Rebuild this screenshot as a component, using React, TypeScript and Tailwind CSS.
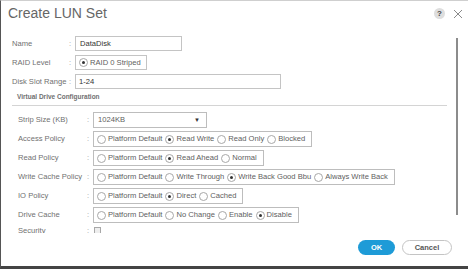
import React from "react";

type Opt = { label: string; checked?: boolean };

function Radio({ checked }: { checked?: boolean }) {
  return (
    <span className="flex h-[9px] w-[9px] shrink-0 items-center justify-center rounded-full border border-[#a8a8a8] bg-white">
      {checked ? <span className="h-[3px] w-[3px] rounded-full bg-[#333]" /> : null}
    </span>
  );
}

function RadioGroup({ options }: { options: Opt[] }) {
  return (
    <div className="flex h-[16px] items-center gap-[3px] border border-[#bdbdbd] bg-white pl-[3px] pr-[6px]">
      {options.map((o) => (
        <span key={o.label} className="flex items-center gap-[2px] text-[#606060]">
          <Radio checked={o.checked} />
          <span className="whitespace-nowrap">{o.label}</span>
        </span>
      ))}
    </div>
  );
}

function TopRow({ label, children }: { label: string; children: React.ReactNode }) {
  return (
    <div className="flex h-[15px] items-center">
      <div className="w-[57px] whitespace-nowrap text-[#707070]">{label}</div>
      <div className="w-[6px] text-[#999]">:</div>
      {children}
    </div>
  );
}

function Row({ label, children }: { label: string; children: React.ReactNode }) {
  return (
    <div className="flex h-[16px] items-center">
      <div className="w-[69px] whitespace-nowrap text-[#707070]">{label}</div>
      <div className="w-[6px] text-[#999]">:</div>
      {children}
    </div>
  );
}

export default function App() {
  return (
    <div className="flex h-[269px] w-[468px] flex-col overflow-hidden border-b-[3px] border-l border-t border-b-[#444] border-l-[#555] border-t-[#cfcfcf] bg-white font-['Liberation_Sans',Arial,sans-serif] text-[7.6px] leading-[10px]">
      {/* Header */}
      <div className="flex h-[33px] shrink-0 items-start justify-between pl-[7px] pr-[5px] pt-[4px]">
        <div className="text-[14px] leading-[16px] text-[#666]">Create LUN Set</div>
        <div className="flex items-center gap-[8px] pt-[3px]">
          <span className="flex h-[11px] w-[11px] items-center justify-center rounded-full bg-[#dedede] text-[8px] font-bold leading-none text-[#444]">
            ?
          </span>
          <svg width="10" height="10" viewBox="0 0 10 10" className="block">
            <path d="M1 1 L9 9 M9 1 L1 9" stroke="#8a8a8a" strokeWidth="1" fill="none" />
          </svg>
        </div>
      </div>

      {/* Body */}
      <div className="flex h-[199px] shrink-0">
        <div className="h-full flex-1 overflow-hidden pl-[11px] pt-[2px]">
          <div className="flex flex-col gap-[4px]">
            <TopRow label="Name">
              <div className="flex h-[15px] w-[107px] items-center border border-[#c4c4c4] px-[4px] text-[#333]">
                DataDisk
              </div>
            </TopRow>
            <TopRow label="RAID Level">
              <div className="flex h-[15px] items-center gap-[2px] border border-[#c4c4c4] pl-[3px] pr-[5px] text-[#606060]">
                <Radio checked />
                <span className="whitespace-nowrap">RAID 0 Striped</span>
              </div>
            </TopRow>
            <TopRow label="Disk Slot Range">
              <div className="flex h-[15px] w-[206px] items-center border border-[#c4c4c4] px-[3px] text-[#333]">
                1-24
              </div>
            </TopRow>
          </div>

          <div className="mt-[4px] h-[8px] pl-[5px] text-[6.5px] font-bold leading-[8px] text-[#707070]">
            Virtual Drive Configuration
          </div>
          <div className="mt-[4px] h-px w-[435px] bg-[#d4d4d4]" />

          <div className="mt-[6px] flex flex-col gap-[3px] pl-[6px]">
            <Row label="Strip Size (KB)">
              <div className="flex h-[16px] w-[114px] items-center justify-between border border-[#bdbdbd] pl-[4px] pr-[6px] text-[#606060]">
                <span>1024KB</span>
                <span className="text-[6px] text-[#333]">▼</span>
              </div>
            </Row>
            <Row label="Access Policy">
              <RadioGroup
                options={[
                  { label: "Platform Default" },
                  { label: "Read Write", checked: true },
                  { label: "Read Only" },
                  { label: "Blocked" },
                ]}
              />
            </Row>
            <Row label="Read Policy">
              <RadioGroup
                options={[
                  { label: "Platform Default" },
                  { label: "Read Ahead", checked: true },
                  { label: "Normal" },
                ]}
              />
            </Row>
            <Row label="Write Cache Policy">
              <RadioGroup
                options={[
                  { label: "Platform Default" },
                  { label: "Write Through" },
                  { label: "Write Back Good Bbu", checked: true },
                  { label: "Always Write Back" },
                ]}
              />
            </Row>
            <Row label="IO Policy">
              <RadioGroup
                options={[
                  { label: "Platform Default" },
                  { label: "Direct", checked: true },
                  { label: "Cached" },
                ]}
              />
            </Row>
            <Row label="Drive Cache">
              <RadioGroup
                options={[
                  { label: "Platform Default" },
                  { label: "No Change" },
                  { label: "Enable" },
                  { label: "Disable", checked: true },
                ]}
              />
            </Row>
            <div className="flex h-[16px] items-start">
              <div className="w-[69px] whitespace-nowrap text-[#707070]">Security</div>
              <div className="w-[6px] text-[#999]">:</div>
              <span className="ml-[1px] mt-[1px] h-[7px] w-[7px] border border-[#a8a8a8] bg-[#eee]" />
            </div>
          </div>
        </div>
        <div className="w-[12px] shrink-0 pt-[4px]">
          <div className="h-[177px] w-[2px] bg-[#8c8c8c]" />
        </div>
      </div>

      {/* Footer */}
      <div className="flex justify-end gap-[7px] pr-[16px] pt-[7px]">
        <button className="flex h-[15px] w-[37px] items-center justify-center rounded-full bg-[#1e9bd7] text-[7.5px] font-bold text-white">
          OK
        </button>
        <button className="flex h-[15px] w-[50px] items-center justify-center rounded-full border border-[#c4c4c4] bg-white text-[7.5px] font-bold text-[#555]">
          Cancel
        </button>
      </div>
    </div>
  );
}
